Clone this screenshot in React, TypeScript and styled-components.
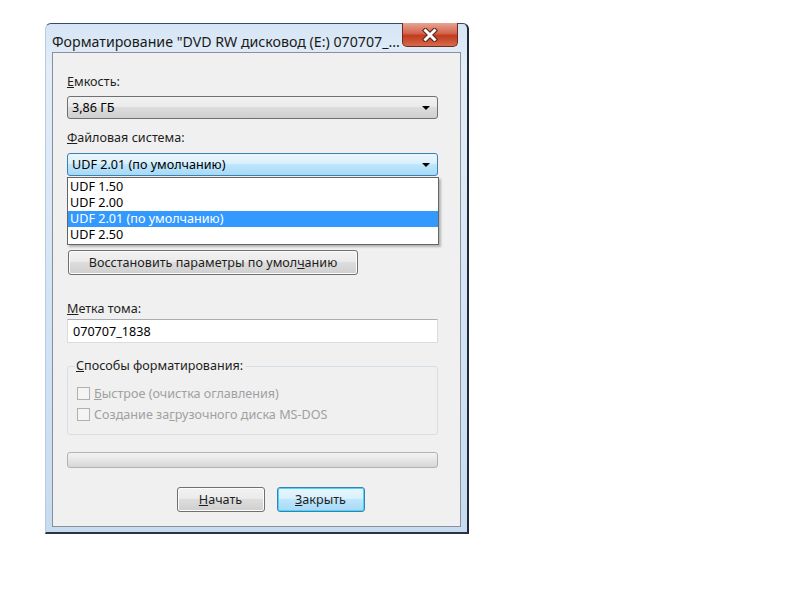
import React from 'react';
import styled, { createGlobalStyle } from 'styled-components';

const GlobalStyle = createGlobalStyle`
  html, body {
    margin: 0;
    padding: 0;
    background: #ffffff;
  }
  body {
    font-family: "Noto Sans", "Liberation Sans", sans-serif;
    font-size: 12.6px;
    color: #000;
  }
`;

const Page = styled.div`
  width: 800px;
  height: 600px;
  padding: 23px 0 0 45px;
  box-sizing: border-box;
`;

const Window = styled.div`
  width: 424px;
  height: 511px;
  box-sizing: border-box;
  display: flex;
  flex-direction: column;
  background: linear-gradient(180deg, #d6e5f5 0%, #e2edf8 40px, #c7dbf1 100%);
  border-top: 1px solid #3c4a5a;
  border-right: 2px solid #1f2a36;
  border-bottom: 2px solid #2a3440;
  border-left: 1px solid #b7cbe2;
  border-radius: 6px 6px 0 0;
  padding: 0 6px 5px 6px;
`;

const TitleBar = styled.div`
  height: 28px;
  display: flex;
  align-items: flex-start;
  justify-content: space-between;
`;

const Title = styled.div`
  padding-top: 8px;
  font-size: 14.2px;
  white-space: nowrap;
  color: #1a1a1a;
`;

const CloseButton = styled.div`
  width: 56px;
  height: 24px;
  margin-top: -1px;
  margin-right: 3px;
  border: 1px solid #6e2a22;
  border-top: none;
  border-radius: 0 0 5px 5px;
  box-sizing: border-box;
  background: linear-gradient(180deg, #e8a493 0%, #d2654d 45%, #c23a1e 55%, #d66a4a 100%);
  display: flex;
  align-items: center;
  justify-content: center;
`;

const Client = styled.div`
  flex: 1;
  background: #f0f0f0;
  border: 1px solid #8a9099;
  display: flex;
  flex-direction: column;
  padding: 21px 22px 0 14px;
`;

const Label = styled.div<{ $top?: number; $gap?: number }>`
  margin-top: ${(p) => p.$top ?? 0}px;
  margin-bottom: ${(p) => p.$gap ?? 0}px;
  height: 16px;
  line-height: 16px;
  color: #1e1e1e;
`;

const Combo = styled.div<{ $active?: boolean }>`
  height: 23px;
  box-sizing: border-box;
  display: flex;
  align-items: center;
  justify-content: space-between;
  padding: 0 7px 0 4px;
  border: 1px solid ${(p) => (p.$active ? '#3c7fb1' : '#707070')};
  border-radius: 3px;
  background: ${(p) =>
    p.$active
      ? 'linear-gradient(180deg, #eaf6fd 0%, #d9f0fc 45%, #bee6fd 50%, #a7d9f5 100%)'
      : 'linear-gradient(180deg, #f2f2f2 0%, #ebebeb 45%, #dddddd 50%, #cfcfcf 100%)'};
`;

const Arrow = styled.span`
  width: 0;
  height: 0;
  border-left: 4px solid transparent;
  border-right: 4px solid transparent;
  border-top: 4px solid #000;
`;

const DropArea = styled.div`
  position: relative;
  height: 74px;
`;

const DropList = styled.div`
  position: absolute;
  left: 0;
  right: -1px;
  top: 1px;
  background: #fff;
  border: 1px solid #646464;
  box-shadow: 2px 2px 2px rgba(0, 0, 0, 0.25);
  padding: 1px 0;
`;

const DropItem = styled.div<{ $selected?: boolean }>`
  height: 16px;
  line-height: 16px;
  padding-left: 2px;
  background: ${(p) => (p.$selected ? '#3399ff' : 'transparent')};
  color: ${(p) => (p.$selected ? '#fff' : '#000')};
`;

const PushButton = styled.div<{ $width: number; $default?: boolean }>`
  width: ${(p) => p.$width}px;
  height: 25px;
  box-sizing: border-box;
  display: flex;
  align-items: center;
  justify-content: center;
  border: 1px solid ${(p) => (p.$default ? '#3c7fb1' : '#707070')};
  border-radius: 3px;
  box-shadow: inset 0 0 0 1px ${(p) => (p.$default ? '#48d6fb' : '#fcfcfc')};
  background: ${(p) =>
    p.$default
      ? 'linear-gradient(180deg, #eaf6fd 0%, #d9f0fc 45%, #bee6fd 50%, #a7d9f5 100%)'
      : 'linear-gradient(180deg, #f2f2f2 0%, #ebebeb 45%, #dddddd 50%, #cfcfcf 100%)'};
  color: #1e1e1e;
`;

const WideButton = styled(PushButton)`
  margin-left: 1px;
`;

const TextBox = styled.div`
  margin-top: 2px;
  height: 24px;
  box-sizing: border-box;
  background: #fff;
  border: 1px solid #dcdcdc;
  border-top-color: #abadb3;
  display: flex;
  align-items: center;
  padding-left: 5px;
`;

const GroupBox = styled.fieldset`
  margin: 15px 0 0 0;
  padding: 9px 9px 6px 9px;
  border: 1px solid #d5dfe5;
  border-radius: 3px;
  height: 77px;
  box-sizing: border-box;
`;

const Legend = styled.legend`
  padding: 0 3px 0 1px;
  margin-left: -2px;
  color: #1e1e1e;
  line-height: 16px;
`;

const CheckRow = styled.div`
  display: flex;
  align-items: center;
  height: 21px;
  color: #a0a0a0;
`;

const CheckBox = styled.span`
  width: 13px;
  height: 13px;
  box-sizing: border-box;
  border: 1px solid #b1b1b1;
  background: #f4f4f4;
  margin-right: 4px;
`;

const Progress = styled.div`
  margin-top: 17px;
  height: 16px;
  box-sizing: border-box;
  border: 1px solid #b2b2b2;
  border-radius: 3px;
  background: linear-gradient(180deg, #f3f3f3 0%, #e6e6e6 50%, #d6d6d6 100%);
`;

const ButtonRow = styled.div`
  display: flex;
  justify-content: center;
  gap: 12px;
  margin-top: 19px;
  padding-left: 36px;
`;

export default function App() {
  return (
    <>
      <GlobalStyle />
      <Page>
        <Window>
          <TitleBar>
            <Title>Форматирование "DVD RW дисковод (E:) 070707_...</Title>
            <CloseButton>
              <svg width="16" height="14" viewBox="0 0 16 14">
                <path
                  d="M3.5 2.5 L12.5 11.5 M12.5 2.5 L3.5 11.5"
                  stroke="#5a2018"
                  strokeWidth="5"
                  strokeLinecap="square"
                />
                <path
                  d="M3.5 2.5 L12.5 11.5 M12.5 2.5 L3.5 11.5"
                  stroke="#ffffff"
                  strokeWidth="3"
                  strokeLinecap="square"
                />
              </svg>
            </CloseButton>
          </TitleBar>
          <Client>
            <Label $gap={6}>
              <u>Е</u>мкость:
            </Label>
            <Combo>
              <span>3,86 ГБ</span>
              <Arrow />
            </Combo>
            <Label $top={11} $gap={7}>
              <u>Ф</u>айловая система:
            </Label>
            <Combo $active>
              <span>UDF 2.01 (по умолчанию)</span>
              <Arrow />
            </Combo>
            <DropArea>
              <DropList>
                <DropItem>UDF 1.50</DropItem>
                <DropItem>UDF 2.00</DropItem>
                <DropItem $selected>UDF 2.01 (по умолчанию)</DropItem>
                <DropItem>UDF 2.50</DropItem>
              </DropList>
            </DropArea>
            <WideButton $width={290}>
              <span>
                Восстановить параметры по умол<u>ч</u>анию
              </span>
            </WideButton>
            <Label $top={26}>
              <u>М</u>етка тома:
            </Label>
            <TextBox>070707_1838</TextBox>
            <GroupBox>
              <Legend>
                <u>С</u>пособы форматирования:
              </Legend>
              <CheckRow>
                <CheckBox />
                <span>
                  <u>Б</u>ыстрое (очистка оглавления)
                </span>
              </CheckRow>
              <CheckRow>
                <CheckBox />
                <span>
                  Создание за<u>г</u>рузочного диска MS-DOS
                </span>
              </CheckRow>
            </GroupBox>
            <Progress />
            <ButtonRow>
              <PushButton $width={88}>
                <span>
                  <u>Н</u>ачать
                </span>
              </PushButton>
              <PushButton $width={88} $default>
                <span>
                  <u>З</u>акрыть
                </span>
              </PushButton>
            </ButtonRow>
          </Client>
        </Window>
      </Page>
    </>
  );
}
